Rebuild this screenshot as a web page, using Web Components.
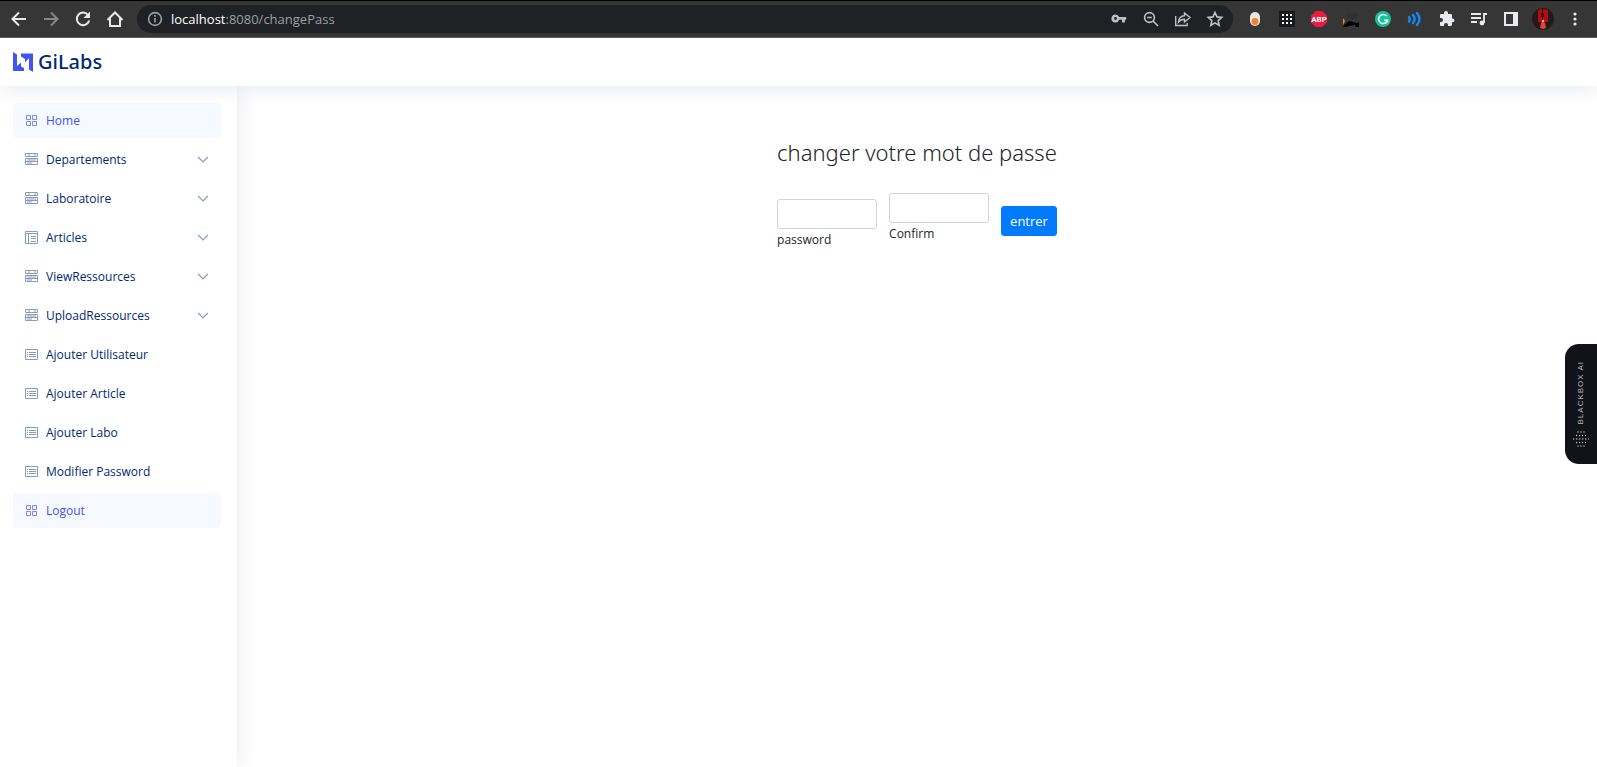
<!DOCTYPE html>
<html lang="fr">
<head>
<meta charset="utf-8">
<title>GiLabs</title>
<style>
  html, body { height: 100%; margin: 0; }
  body { font-family: "Open Sans", "Noto Sans", sans-serif; background: #fff; }
</style>
</head>
<body>
<gi-app></gi-app>

<template id="app">
  <style>
    :host { display: flex; flex-direction: column; min-height: 100%; position: relative; overflow: hidden; }
    .body { display: flex; flex: 1; }
    main { flex: 1; display: flex; justify-content: center; align-items: flex-start; padding-top: 50px; }
    gi-assistant-tab { position: absolute; right: 0; top: 344px; z-index: 3; }
  </style>
  <gi-toolbar></gi-toolbar>
  <gi-header></gi-header>
  <div class="body">
    <gi-sidebar></gi-sidebar>
    <main><gi-password-form></gi-password-form></main>
  </div>
  <gi-assistant-tab></gi-assistant-tab>
</template>

<template id="toolbar">
  <style>
    :host { display: flex; align-items: center; height: 38px; box-sizing: border-box; padding: 0 12px 0 9px; position: relative; z-index: 4;
      background: #363636; border-top: 1px solid #000; border-bottom: 1px solid #5c5c5c; color: #e8eaed; }
    button { all: unset; width: 20px; height: 20px; display: block; flex: none; }
    svg { display: block; width: 20px; height: 20px; fill: none; stroke: currentColor; stroke-width: 2; }
    .nav { display: flex; gap: 12px; }
    .off { color: #85878a; }
    .address { flex: 1; display: flex; align-items: center; gap: 12px; height: 28px; margin: 0 12px 0 12px; padding: 0 8px; border-radius: 14px; background: #202124; color: #bdc1c6; }
    .address .info { color: #9aa0a6; }
    .url { flex: 1; font-size: 13px; line-height: 20px; color: #9aa0a6; margin-left: -6px; }
    .url b { font-weight: 400; color: #fff; }
    .address svg { stroke-width: 1.6; }
    .ext { display: flex; gap: 12px; }
    text { font: 700 8px "Roboto", sans-serif; fill: #fff; stroke: none; }
  </style>
  <div class="nav">
    <button aria-label="Back"><svg viewBox="0 0 20 20"><path d="M17 10H4M10 3.500L3.500 10l6.500 6.500"/></svg></button>
    <button class="off" aria-label="Forward"><svg viewBox="0 0 20 20"><path d="M3 10h13M10 3.500L16.500 10 10 16.500"/></svg></button>
    <button aria-label="Reload"><svg viewBox="0 0 20 20"><path d="M15.300 6.200A6.300 6.300 0 1 0 16.200 11.500"/><path d="M17 2.500v6.500h-6.500z" fill="currentColor" stroke="none"/></svg></button>
    <button aria-label="Home page"><svg viewBox="0 0 20 20"><path d="M2.500 11L10 3.500l7.500 7.500M5 9.500v7.500h10V9.500"/></svg></button>
  </div>
  <div class="address">
    <button class="info" aria-label="Site information"><svg viewBox="0 0 20 20"><circle cx="10" cy="10" r="6.400"/><path d="M10 9v4.500M10 6v1.700"/></svg></button>
    <span class="url"><b>localhost</b>:8080/changePass</span>
    <button aria-label="Passwords"><svg viewBox="0 0 20 20" style="stroke:none;fill:currentColor"><path fill-rule="evenodd" d="M6.500 5.500a4 4 0 1 0 3.700 5.300H13v2.700h3v-2.700h1.200V8h-7A4 4 0 0 0 6.500 5.500zm0 2.600a1.400 1.400 0 1 1 0 2.800 1.400 1.400 0 0 1 0-2.800z"/></svg></button>
    <button aria-label="Zoom"><svg viewBox="0 0 20 20"><circle cx="8.500" cy="8.500" r="4.900"/><path d="M12 12l5 5M6.200 8.500h4.600"/></svg></button>
    <button aria-label="Share"><svg viewBox="0 0 20 20" style="stroke-width:1.400"><path d="M2.700 7v9.500h11.500v-2.500M5.500 13c.3-4 2.500-6 6-6.200V4L17 8.500 11.500 13v-2.800C9 10.300 7 11 5.500 13z"/></svg></button>
    <button aria-label="Bookmark"><svg viewBox="0 0 20 20"><path d="M10 3.500l2 4.400 4.700.5-3.500 3.200 1 4.700-4.200-2.400-4.200 2.400 1-4.700L3.300 8.400 8 7.900z"/></svg></button>
  </div>
  <div class="ext">
    <button aria-label="Recorder"><svg viewBox="0 0 20 20" style="stroke:none"><rect x="5" y="3" width="10" height="14" rx="5" fill="#e6e6e6"/><circle cx="10" cy="12.500" r="3.400" fill="#f5822a"/></svg></button>
    <button aria-label="Apps grid"><svg viewBox="0 0 20 20"><path d="M2 2h16v16H2z" fill="#191a1c" stroke="none"/><path d="M5 6h10M5 10h10M5 14h10" stroke="#fff" stroke-dasharray="2"/></svg></button>
    <button aria-label="Ad blocker"><svg viewBox="0 0 20 20"><path d="M6.700 2h6.600L18 6.700v6.600L13.300 18H6.700L2 13.300V6.700z" fill="#ec1b40" stroke="none"/><text x="10" y="13" text-anchor="middle">ABP</text></svg></button>
    <button aria-label="Cat"><svg viewBox="0 0 20 20" style="stroke:none"><path d="M2 18l2-3 4-3 8 2 2-1v5h-3l-1-2-7 1-1 1z" fill="#000"/><path d="M2 9l2 3-2 4z" fill="#f28c18"/><path d="M6 5l3-1 4 1 3-2 1 5-5 2-6-1z" fill="#303030"/></svg></button>
    <button aria-label="Writing helper"><svg viewBox="0 0 20 20"><circle cx="10" cy="10" r="8" fill="#15c39a" stroke="none"/><path d="M13.500 7a4.500 4.500 0 1 0 1 4.200h-3.500M14.500 11v2.500" stroke="#fff" stroke-width="1.500"/></svg></button>
    <button aria-label="Sound"><svg viewBox="0 0 20 20" style="stroke:#1488f5;stroke-linecap:round;stroke-width:2.400"><path d="M4 8q1.600 2 0 4.500M8 6q3.200 4 0 8M12 4q5 6 0 12"/></svg></button>
    <button aria-label="Extensions"><svg viewBox="0 0 20 20"><path d="M16 9.500h-1V6.200c0-.8-.6-1.200-1.200-1.200H11V4a2 2 0 0 0-4 0v1H4.200C3.500 5 3 5.500 3 6.200V9h1a2 2 0 0 1 0 4H3v3c0 .6.500 1 1.200 1H7v-1a2 2 0 0 1 4 0v1h2.800c.7 0 1.200-.5 1.200-1.200v-2.600h1a1.900 1.900 0 0 0 0-3.700z" fill="currentColor" stroke="none"/></svg></button>
    <button aria-label="Media"><svg viewBox="0 0 20 20" style="stroke-width:1.800"><path d="M2 5h10M2 9h10M2 13h6M18 5h-3v9"/><circle cx="13" cy="14" r="2.400" fill="currentColor" stroke="none"/></svg></button>
    <button aria-label="Side panel"><svg viewBox="0 0 20 20"><path d="M3 3h14v14H3zM5 5v10h7V5z" fill="currentColor" fill-rule="evenodd" stroke="none"/></svg></button>
    <button aria-label="Profile"><svg viewBox="0 0 20 20" style="overflow:visible;stroke:none"><circle cx="10" cy="10" r="11" fill="#251a1b"/><path d="M5 1l4-1v13H5zM10 0l5 1v12h-5z" fill="#b40c12"/><path d="M8 4h3v4H8z" fill="#4c0708"/><path d="M10 12l2 2 1 5-3 1-3-1 1-5z" fill="#ed3e3c"/><circle cx="10" cy="12" r="1.300" fill="#d9a08c"/></svg></button>
    <button aria-label="Menu"><svg viewBox="0 0 20 20" style="stroke:none;fill:currentColor"><circle cx="10" cy="5" r="1.600"/><circle cx="10" cy="10" r="1.600"/><circle cx="10" cy="15" r="1.600"/></svg></button>
  </div>
</template>

<template id="header">
  <style>
    :host { display: flex; align-items: center; height: 48px; padding: 0 13px; background: #fff; position: relative; z-index: 2; box-shadow: 0 2px 20px rgba(1,41,112,.1); }
    a { display: flex; align-items: center; gap: 4px; color: #012970; text-decoration: none; font: 500 20px/24px "Noto Sans", sans-serif; }
    svg { width: 21px; height: 20px; fill: #4154f1; }
  </style>
  <a href="#"><svg viewBox="0 0 21 20"><path d="M0 0l4 2.500v11.500l4-3.500v4l3 1.500v3H0z"/><path d="M8 1.500h12V20l-4-2.500V6l-4 4.500V7L8 4.500z"/></svg><span>GiLabs</span></a>
</template>

<template id="sidebar">
  <style>
    :host { display: block; flex: none; width: 237px; box-sizing: border-box; padding: 17px 16px 17px 13px; background: #fff; box-shadow: 0 0 20px rgba(1,41,112,.1); }
    nav { display: flex; flex-direction: column; gap: 4px; }
  </style>
  <nav>
    <gi-nav-item icon="grid" active>Home</gi-nav-item>
    <gi-nav-item icon="menu" expandable>Departements</gi-nav-item>
    <gi-nav-item icon="menu" expandable>Laboratoire</gi-nav-item>
    <gi-nav-item icon="layout" expandable>Articles</gi-nav-item>
    <gi-nav-item icon="menu" expandable>ViewRessources</gi-nav-item>
    <gi-nav-item icon="menu" expandable>UploadRessources</gi-nav-item>
    <gi-nav-item icon="card">Ajouter Utilisateur</gi-nav-item>
    <gi-nav-item icon="card">Ajouter Article</gi-nav-item>
    <gi-nav-item icon="card">Ajouter Labo</gi-nav-item>
    <gi-nav-item icon="card">Modifier Password</gi-nav-item>
    <gi-nav-item icon="grid" active>Logout</gi-nav-item>
  </nav>
</template>

<template id="nav-item">
  <style>
    :host { display: block; }
    a { display: flex; align-items: center; gap: 8px; height: 35px; padding: 0 12px; border-radius: 4px; color: #012970; text-decoration: none; font-size: 12px; line-height: 16px; font-weight: 500; }
    span { flex: 1; }
    svg { width: 13px; height: 13px; fill: none; stroke: #899bbd; stroke-width: 1.2; }
    :host([active]) a { background: #f6f9ff; color: #4154f1; }
    :host([active]) svg { stroke: #7c89f5; }
    .chevron { display: none; width: 12px; height: 12px; stroke-width: 1.6; }
    :host([expandable]) .chevron { display: block; }
  </style>
  <a href="#"><svg class="icon" viewBox="0 0 13 13"></svg><span><slot></slot></span><svg class="chevron" viewBox="0 0 16 16"><path d="M1.500 4L8 10.500 14.500 4"/></svg></a>
</template>

<template id="password-form">
  <style>
    :host { display: block; color: #212529; }
    h1 { margin: 0; font: 300 22px/32px "Noto Sans", sans-serif; white-space: nowrap; }
    form { display: flex; align-items: center; gap: 12px; height: 68px; margin-top: 19px; }
    gi-field:first-child { align-self: flex-end; }
    button { height: 30px; padding: 0 8px; border: 1px solid #007bff; border-radius: 3px; background: #007bff; color: #fff; font: 13px/20px "Open Sans", sans-serif; }
  </style>
  <h1>changer votre mot de passe</h1>
  <form>
    <gi-field>password</gi-field>
    <gi-field>Confirm</gi-field>
    <button type="button">entrer</button>
  </form>
</template>

<template id="field">
  <style>
    :host { display: flex; flex-direction: column; width: 100px; padding-bottom: 4px; }
    input { height: 30px; box-sizing: border-box; width: 100%; border: 1px solid #ced4da; border-radius: 3px; padding: 4px 8px; font: 13px/20px "Open Sans", sans-serif; background: #fff; }
    label { font-size: 12px; line-height: 22px; }
  </style>
  <input type="password" id="value"><label for="value"><slot></slot></label>
</template>

<template id="assistant-tab">
  <style>
    :host { display: block; }
    button { all: unset; box-sizing: border-box; display: flex; flex-direction: column; align-items: center; justify-content: space-between; width: 32px; height: 120px; padding: 17px 0; border-radius: 14px 0 0 14px; background: #11121a; color: #b9bac0; }
    span { writing-mode: vertical-rl; transform: rotate(180deg); font: 8px/10px "Liberation Sans", sans-serif; letter-spacing: 1px; white-space: nowrap; }
    svg { width: 16px; height: 16px; fill: none; stroke: #d4d4d8; stroke-linecap: round; stroke-width: 1.3; stroke-dasharray: 0 3; }
  </style>
  <button><span>BLACKBOX AI</span><svg viewBox="0 0 16 16"><path d="M5 1h6.500M3.500 4.500H13M.8 8H16M3.500 11.500H13M5 15h6.500"/></svg></button>
</template>

<script>
  const define = (name, templateId, setup) => customElements.define(name, class extends HTMLElement {
    constructor() {
      super();
      this.attachShadow({ mode: 'open' }).append(document.getElementById(templateId).content.cloneNode(true));
    }
    connectedCallback() { if (setup) setup(this); }
  });

  const icons = {
    grid: '<path d="M1.500 1.500h4v4h-4zM7.500 1.500h4v4h-4zM1.500 7.500h4v4h-4zM7.500 7.500h4v4h-4z" stroke-width="1" stroke-linejoin="round"/>',
    menu: '<path d="M.5.500h12v3H.5zM.5 5.500h12v6H.5zM.5 8.500h12M2 7h9M2 10h5M3 2h2M9 2h2" stroke-width="1" stroke-linejoin="round"/>',
    layout: '<path d="M.5.500h12v12H.5zM.5 2.500h12M3.500 2.500v10M6 5.500h5M6 7.500h5M6 10.500h5" stroke-width="1" stroke-linejoin="round"/>',
    card: '<path d="M.5 1.500h12v10H.5zM4 4.500h7M4 6.500h7M4 8.500h7M2 4.500h1M2 6.500h1M2 8.500h1" stroke-width="1" stroke-linejoin="round"/>'
  };

  define('gi-field', 'field');
  define('gi-password-form', 'password-form');
  define('gi-nav-item', 'nav-item', el => {
    el.shadowRoot.querySelector('.icon').innerHTML = icons[el.getAttribute('icon')];
  });
  define('gi-sidebar', 'sidebar');
  define('gi-header', 'header');
  define('gi-toolbar', 'toolbar');
  define('gi-assistant-tab', 'assistant-tab');
  define('gi-app', 'app');
</script>
</body>
</html>
